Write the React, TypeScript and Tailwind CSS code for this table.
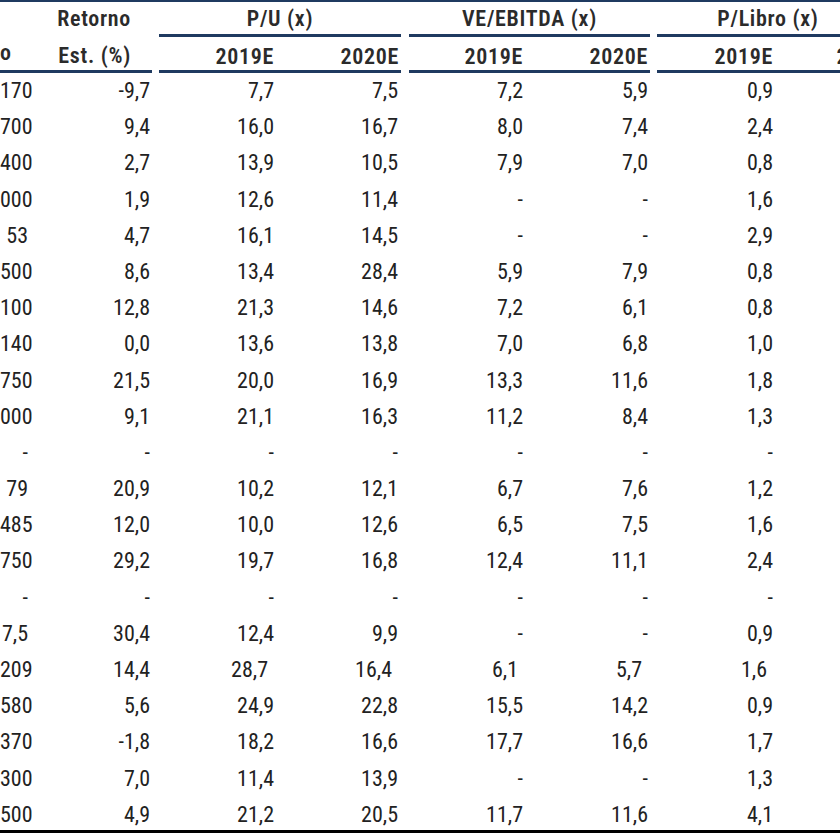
type Row = {
  cells: string[]
  shift?: boolean
}

const rows: Row[] = [
  { cells: ["170", "-9,7", "7,7", "7,5", "7,2", "5,9", "0,9"] },
  { cells: ["700", "9,4", "16,0", "16,7", "8,0", "7,4", "2,4"] },
  { cells: ["400", "2,7", "13,9", "10,5", "7,9", "7,0", "0,8"] },
  { cells: ["000", "1,9", "12,6", "11,4", "-", "-", "1,6"] },
  { cells: ["53", "4,7", "16,1", "14,5", "-", "-", "2,9"] },
  { cells: ["500", "8,6", "13,4", "28,4", "5,9", "7,9", "0,8"] },
  { cells: ["100", "12,8", "21,3", "14,6", "7,2", "6,1", "0,8"] },
  { cells: ["140", "0,0", "13,6", "13,8", "7,0", "6,8", "1,0"] },
  { cells: ["750", "21,5", "20,0", "16,9", "13,3", "11,6", "1,8"] },
  { cells: ["000", "9,1", "21,1", "16,3", "11,2", "8,4", "1,3"] },
  { cells: ["-", "-", "-", "-", "-", "-", "-"] },
  { cells: ["79", "20,9", "10,2", "12,1", "6,7", "7,6", "1,2"] },
  { cells: ["485", "12,0", "10,0", "12,6", "6,5", "7,5", "1,6"] },
  { cells: ["750", "29,2", "19,7", "16,8", "12,4", "11,1", "2,4"] },
  { cells: ["-", "-", "-", "-", "-", "-", "-"] },
  { cells: ["7,5", "30,4", "12,4", "9,9", "-", "-", "0,9"] },
  { cells: ["209", "14,4", "28,7", "16,4", "6,1", "5,7", "1,6"], shift: true },
  { cells: ["580", "5,6", "24,9", "22,8", "15,5", "14,2", "0,9"] },
  { cells: ["370", "-1,8", "18,2", "16,6", "17,7", "16,6", "1,7"] },
  { cells: ["300", "7,0", "11,4", "13,9", "-", "-", "1,3"] },
  { cells: ["500", "4,9", "21,2", "20,5", "11,7", "11,6", "4,1"] },
]

function DataRow({ row, last }: { row: Row; last: boolean }) {
  const [c0, c1, c2, c3, c4, c5, c6] = row.cells
  const s = row.shift
  return (
    <div className={`flex ${last ? "h-[33px]" : "h-[36.2px]"} leading-[36px] whitespace-nowrap`}>
      <div className="w-[30px] shrink-0 text-right pr-[2px]">{c0}</div>
      <div className="w-[122px] shrink-0 text-right pr-[2px]">{c1}</div>
      <div className={`ml-[7px] w-[117px] shrink-0 text-right ${s ? "pr-[8px]" : "pr-[2px]"}`}>{c2}</div>
      <div className={`w-[125px] shrink-0 text-right ${s ? "pr-[9px]" : "pr-[3px]"}`}>{c3}</div>
      <div className={`ml-[8px] w-[116px] shrink-0 text-right ${s ? "pr-[7px]" : "pr-[2px]"}`}>{c4}</div>
      <div className={`w-[125px] shrink-0 text-right ${s ? "pr-[8px]" : "pr-[2px]"}`}>{c5}</div>
      <div className={`ml-[7px] w-[118px] shrink-0 text-right ${s ? "pr-[8px]" : "pr-[2px]"}`}>{c6}</div>
      <div className="w-[125px] shrink-0" />
    </div>
  )
}

function GroupHead({
  title,
  gap,
  w1,
  w2,
  titlePad,
}: {
  title: string
  gap: string
  w1: string
  w2: string
  titlePad?: string
}) {
  return (
    <div className={`${gap} shrink-0`}>
      <div
        className={`h-[35px] pt-[1px] border-b-[3px] border-[#1f3a60] leading-[32px] text-center ${titlePad ?? ""}`}
      >
        {title}
      </div>
      <div className="flex h-[36px] pt-[2px] border-b-[3px] border-[#1f3a60] leading-[35px]">
        <div className={`${w1} shrink-0 text-right pr-[2px]`}>2019E</div>
        <div className={`${w2} shrink-0 text-right pr-[2px]`}>2020E</div>
      </div>
    </div>
  )
}

export default function App() {
  return (
    <div className="w-[840px] h-[840px] overflow-hidden bg-white">
      <div className="w-[1000px] border-t-2 border-[#1f3a60]">
        {/* cabecera */}
        <div className="flex font-['Roboto_Condensed','Liberation_Sans',sans-serif] font-semibold tracking-[0.7px] text-[22px] text-[#2b2b2b] whitespace-nowrap">
          <div className="flex w-[152px] shrink-0 self-end h-[71px] border-b-[3px] border-[#1f3a60]">
            <div className="w-[30px] shrink-0 flex flex-col justify-end">
              <div className="leading-[35px] pt-[2px]">o</div>
            </div>
            <div className="w-[122px] shrink-0 text-right pr-[21px]">
              <div className="h-[35px] pt-[1px] leading-[32px]">Retorno</div>
              <div className="pt-[1px] leading-[35px]">Est. (%)</div>
            </div>
          </div>
          <GroupHead title="P/U (x)" gap="ml-[7px]" w1="w-[117px]" w2="w-[125px]" />
          <GroupHead title="VE/EBITDA (x)" gap="ml-[8px]" w1="w-[116px]" w2="w-[125px]" />
          <GroupHead
            title="P/Libro (x)"
            gap="ml-[7px]"
            w1="w-[118px]"
            w2="w-[125px] pr-[5px]"
            titlePad="pr-[21px]"
          />
        </div>

        {/* datos */}
        <div className="font-['Roboto_Condensed','Liberation_Sans',sans-serif] text-[22px] text-[#222]">
          {rows.map((r, i) => (
            <DataRow key={i} row={r} last={i === rows.length - 1} />
          ))}
        </div>
        <div className="h-[3px] bg-black" />
      </div>
    </div>
  )
}
